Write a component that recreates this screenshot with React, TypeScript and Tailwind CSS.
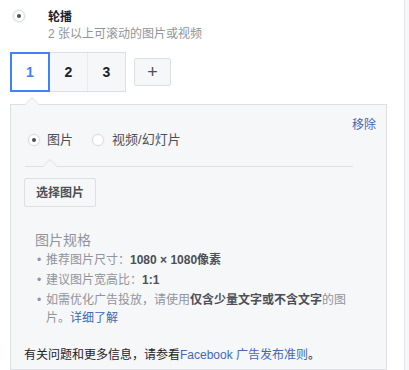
import React, { useState } from 'react';

const FONT = '"Liberation Sans", "Noto Sans CJK SC", sans-serif';

const Radio: React.FC<{ checked?: boolean }> = ({ checked }) => (
  <span className="w-[12px] h-[12px] rounded-full border border-[#dadde1] bg-white shadow-[0_0_0_1px_#f1f2f4] flex items-center justify-center shrink-0">
    {checked && <span className="w-[4px] h-[4px] rounded-full bg-[#4b4f56]" />}
  </span>
);

export default function App() {
  const [tab, setTab] = useState(1);

  return (
    <div className="w-[409px] h-[370px] bg-white overflow-hidden flex" style={{ fontFamily: FONT }}>
      <div className="w-[405px] shrink-0 border-r border-[#e5e6e9] flex flex-col">
        {/* format option */}
        <div className="flex items-start pl-[13px] pt-[9px]">
          <div className="pt-[1px]">
            <Radio checked />
          </div>
          <div className="ml-[23px] leading-[16px]">
            <div className="text-[12px] font-bold text-[#1d2129]">轮播</div>
            <div className="text-[12px] text-[#90949c] mt-[1px]">2 张以上可滚动的图片或视频</div>
          </div>
        </div>

        {/* card tabs */}
        <div className="flex items-center pl-[10px] mt-[10px]">
          <div className="flex border border-[#dddfe2] bg-[#f6f7f9]">
            {[1, 2, 3].map((n) => (
              <button
                key={n}
                onClick={() => setTab(n)}
                className={
                  n === tab
                    ? 'w-[40px] h-[40px] -m-px bg-white border-2 border-[#4080ff] text-[#4080ff] text-[14px] font-bold flex items-center justify-center relative z-10'
                    : 'w-[38px] h-[38px] border-l border-[#e9ebee] text-[#1d2129] text-[14px] font-bold flex items-center justify-center'
                }
              >
                {n}
              </button>
            ))}
          </div>
          <button className="ml-[8px] w-[37px] h-[28px] rounded-[2px] border border-[#dddfe2] bg-[#f6f7f9] text-[#4b4f56] text-[18px] leading-none flex items-center justify-center">
            +
          </button>
        </div>

        {/* card panel */}
        <div className="relative ml-[10px] w-[377px] mt-[12px] border border-[#dddfe2] bg-[#f6f7f9] flex-1">
          <span className="absolute -top-[8px] left-[13px] w-0 h-0 border-l-[8px] border-r-[8px] border-b-[8px] border-l-transparent border-r-transparent border-b-[#dddfe2]" />
          <span className="absolute -top-[7px] left-[14px] w-0 h-0 border-l-[7px] border-r-[7px] border-b-[7px] border-l-transparent border-r-transparent border-b-[#f6f7f9]" />

          <div className="flex justify-end pr-[10px] pt-[13px]">
            <span className="text-[12px] leading-[14px] text-[#4267b2]">移除</span>
          </div>

          <div className="mx-[14px] relative border-b border-[#dddfe2] pb-[18px] w-[328px]">
            <div className="flex items-center h-[16px] pl-[3px]">
              <Radio checked />
              <span className="ml-[7px] text-[13px] text-[#4b4f56]">图片</span>
              <span className="ml-[19px]">
                <Radio />
              </span>
              <span className="ml-[8px] text-[13px] text-[#4b4f56]">视频/幻灯片</span>
            </div>
            <span className="absolute -bottom-px left-[17px] w-0 h-0 border-l-[8px] border-r-[8px] border-b-[8px] border-l-transparent border-r-transparent border-b-[#dddfe2]" />
            <span className="absolute -bottom-px left-[18px] w-0 h-0 border-l-[7px] border-r-[7px] border-b-[7px] border-l-transparent border-r-transparent border-b-[#f6f7f9]" />
          </div>

          <div className="px-[13px] mt-[11px]">
            <button className="h-[29px] px-[11px] border border-[#dddfe2] rounded-[2px] bg-[#f6f7f9] text-[12px] text-[#4b4f56] font-bold">
              选择图片
            </button>
          </div>

          <div className="pl-[24px] pr-[28px] mt-[24px] text-[12px] leading-[19px] text-[#90949c]">
            <div className="text-[14px] leading-[18px] mb-[2px]">图片规格</div>
            <ul>
              <li className="flex">
                <span className="w-[11px] shrink-0 pl-[2px]">•</span>
                <span>
                  推荐图片尺寸：<b className="text-[#4b4f56]">1080 × 1080像素</b>
                </span>
              </li>
              <li className="flex mt-px">
                <span className="w-[11px] shrink-0 pl-[2px]">•</span>
                <span>
                  建议图片宽高比：<b className="text-[#4b4f56]">1:1</b>
                </span>
              </li>
              <li className="flex mt-px leading-[18px]">
                <span className="w-[11px] shrink-0 pl-[2px]">•</span>
                <span>
                  如需优化广告投放，请使用<b className="text-[#4b4f56]">仅含少量文字或不含文字</b>的图片。
                  <span className="text-[#4267b2]">详细了解</span>
                </span>
              </li>
            </ul>
          </div>

          <div className="px-[13px] mt-[20px] text-[12px] leading-[16px] text-[#1d2129]">
            有关问题和更多信息，请参看<span className="text-[#4267b2]">Facebook 广告发布准则</span>。
          </div>
        </div>
      </div>
      <div className="flex-1 bg-[#f6f7f9]" />
    </div>
  );
}
